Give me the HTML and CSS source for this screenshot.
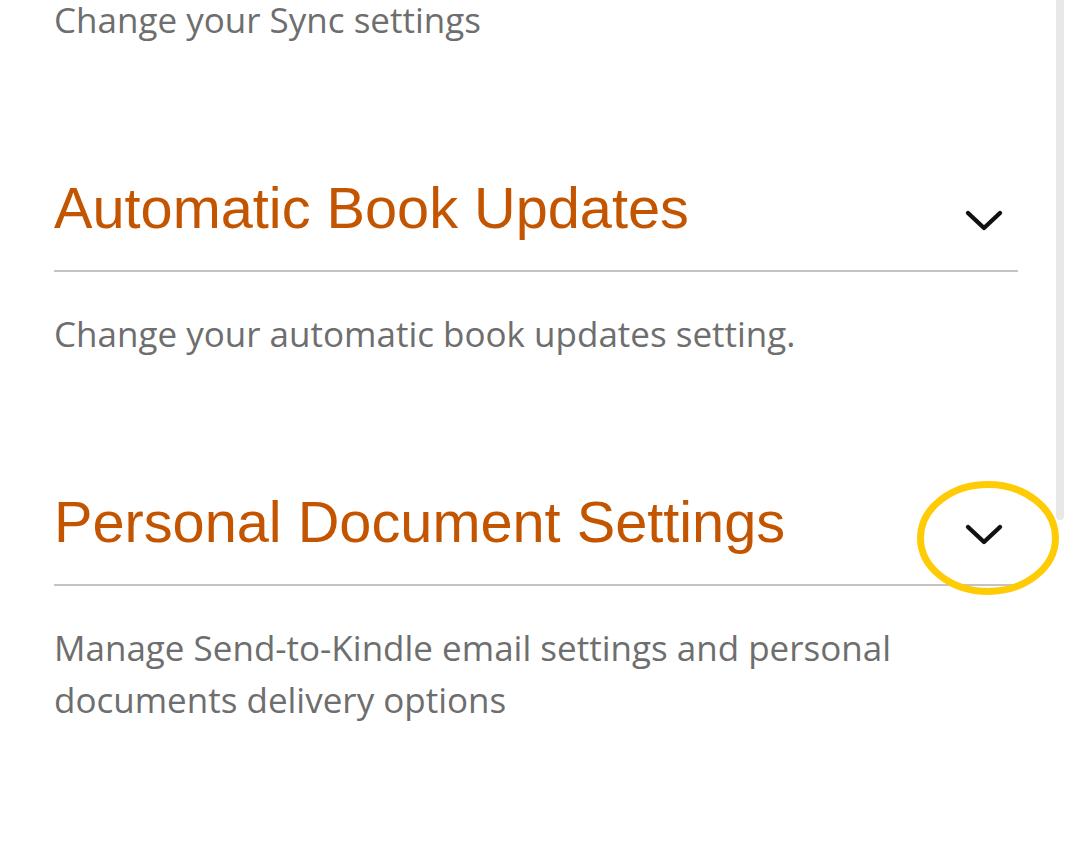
FILE: index.html
```html
<!DOCTYPE html>
<html lang="en">
<head>
    <meta charset="UTF-8">
    <meta name="viewport" content="width=device-width, initial-scale=1.0">
    <title>Kindle Settings</title>
    <link rel="stylesheet" href="styles.css">
</head>
<body>
    <div class="page">
        <p class="desc intro">Change your Sync settings</p>

        <div class="section">
            <div class="section-head">
                <h2>Automatic Book Updates</h2>
                <span class="chevron">
                    <svg width="40" height="26" viewBox="0 0 40 26"><path d="M4 5 L20 20 L36 5" fill="none" stroke="#111" stroke-width="4.4" stroke-linecap="round" stroke-linejoin="round"/></svg>
                </span>
            </div>
            <p class="desc">Change your automatic book updates setting.</p>
        </div>

        <div class="section">
            <div class="section-head">
                <h2>Personal Document Settings</h2>
                <span class="chevron">
                    <svg width="40" height="26" viewBox="0 0 40 26"><path d="M4 5 L20 20 L36 5" fill="none" stroke="#111" stroke-width="4.4" stroke-linecap="round" stroke-linejoin="round"/></svg>
                    <!-- yellow ring drawn over the toggle -->
                    <svg class="ring" width="146" height="118" viewBox="0 0 146 118"><ellipse cx="73" cy="59" rx="67.5" ry="53.5" fill="none" stroke="#ffcb05" stroke-width="7"/></svg>
                </span>
            </div>
            <p class="desc">Manage Send-to-Kindle email settings and personal documents delivery options</p>
        </div>
    </div>
    <div class="scrollbar"></div>
</body>
</html>
```

FILE: styles.css
```css
body {
    margin: 0;
    padding: 0;
    background-color: #fff;
    font-family: "Open Sans", "Noto Sans", sans-serif;
    overflow: hidden;
}
.page {
    padding: 0 52px 0 54px;
}
.desc {
    margin: 0;
    color: #6e6e6e;
    font-size: 35px;
    line-height: 52px;
    max-width: 860px;
}
.desc.intro {
    line-height: 40px;
    margin-bottom: 6px;
}
.section {
    padding-top: 127px;
}
.section-head {
    display: flex;
    justify-content: space-between;
    align-items: center;
    border-bottom: 2px solid #c4c4c4;
    padding-bottom: 27px;
    margin-bottom: 36px;
}
.section-head h2 {
    margin: 0;
    font-family: "Liberation Sans", Arial, sans-serif;
    font-weight: normal;
    font-size: 57.7px;
    line-height: 70px;
    color: #c45500;
}
.chevron {
    position: relative;
    display: flex;
    align-self: flex-end;
    margin-right: 14px;
    margin-bottom: 9px;
}
.ring {
    position: absolute;
    left: -49px;
    top: -43px;
}
.scrollbar {
    position: fixed;
    top: 0;
    right: 6px;
    width: 8px;
    height: 520px;
    border-radius: 0 0 4px 4px;
    background-color: #e8e8e8;
}
```
